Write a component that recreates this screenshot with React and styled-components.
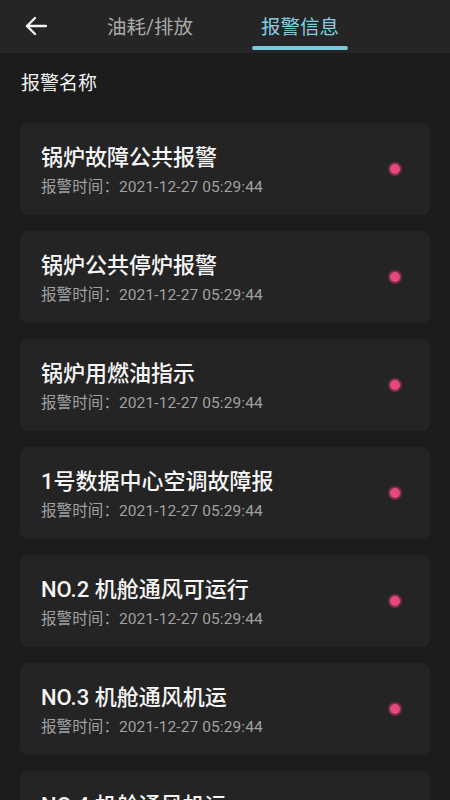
import React from 'react'
import styled, { createGlobalStyle } from 'styled-components'

const GlobalStyle = createGlobalStyle`
  html, body {
    margin: 0;
    padding: 0;
    background: #1c1c1c;
  }
  body {
    font-family: Roboto, "Noto Sans CJK SC", sans-serif;
  }
`

const Page = styled.div`
  width: 450px;
  height: 800px;
  overflow: hidden;
  background: #1c1c1c;
  display: flex;
  flex-direction: column;
`

const Header = styled.div`
  height: 53px;
  flex-shrink: 0;
  background: #252525;
  display: flex;
  align-items: stretch;
`

const BackButton = styled.div`
  width: 76px;
  display: flex;
  align-items: center;
  padding-left: 25px;
  box-sizing: border-box;
  padding-bottom: 2px;
`

const Tab = styled.div`
  width: ${p => p.w}px;
  margin-left: ${p => p.offset || 0}px;
  display: flex;
  flex-direction: column;
  align-items: center;
  justify-content: center;
  position: relative;
  font-size: 19.5px;
  color: ${p => (p.active ? '#80cfe0' : '#a9a9a9')};
  padding-bottom: 2px;
  box-sizing: border-box;
`

const Underline = styled.div`
  position: absolute;
  left: 0;
  right: 0;
  bottom: 3px;
  height: 4px;
  border-radius: 2px;
  background: #7cc8da;
`

const SectionTitle = styled.div`
  flex-shrink: 0;
  color: #f2f2f2;
  font-size: 19px;
  padding: 15px 0 0 21px;
  height: 53px;
  box-sizing: border-box;
`

const List = styled.div`
  flex-shrink: 0;
  display: flex;
  flex-direction: column;
  gap: 16px;
  padding: 17px 20px 0 20px;
`

const Card = styled.div`
  height: 92px;
  flex-shrink: 0;
  background: #242424;
  border-radius: 8px;
  display: flex;
  align-items: center;
  padding: 0 30px 0 21px;
  box-sizing: border-box;
`

const CardBody = styled.div`
  flex: 1;
  display: flex;
  flex-direction: column;
  gap: 5px;
  padding-top: 3px;
`

const CardTitle = styled.div`
  color: #f5f5f5;
  font-size: 22px;
  font-weight: 500;
  line-height: 28px;
`

const CardTime = styled.div`
  color: #a0a0a0;
  font-size: 15.5px;
  line-height: 20px;
  letter-spacing: 0.1px;
`

const Dot = styled.div`
  width: 10px;
  height: 10px;
  border-radius: 50%;
  background: #e6497c;
  box-shadow: 0 0 0 2px rgba(160, 50, 90, 0.65);
`

const alarms = [
  '锅炉故障公共报警',
  '锅炉公共停炉报警',
  '锅炉用燃油指示',
  '1号数据中心空调故障报',
  'NO.2 机舱通风可运行',
  'NO.3 机舱通风机运',
  'NO.4 机舱通风机运',
]

const App = () => {
  return (
    <Page>
      <GlobalStyle />
      <Header>
        <BackButton>
          <svg width="22" height="20" viewBox="0 0 22 20" fill="none">
            <path d="M21 10H2M10 2L2 10L10 18" stroke="#f5f5f5" strokeWidth="2.4" strokeLinecap="round" strokeLinejoin="round" />
          </svg>
        </BackButton>
        <Tab w={148}>油耗/排放</Tab>
        <Tab w={96} offset={28} active>
          报警信息
          <Underline />
        </Tab>
      </Header>
      <SectionTitle>报警名称</SectionTitle>
      <List>
        {alarms.map((name, i) => (
          <Card key={i}>
            <CardBody>
              <CardTitle>{name}</CardTitle>
              <CardTime>报警时间：2021-12-27 05:29:44</CardTime>
            </CardBody>
            <Dot />
          </Card>
        ))}
      </List>
    </Page>
  )
}

export default App
